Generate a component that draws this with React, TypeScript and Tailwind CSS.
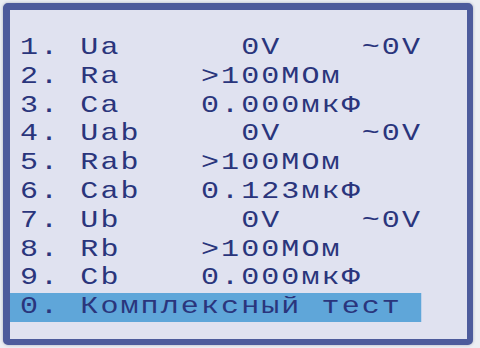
const rows = [
  "1. Ua      0V    ~0V",
  "2. Ra    >100MОм",
  "3. Ca    0.000мкФ",
  "4. Uab     0V    ~0V",
  "5. Rab   >100MОм",
  "6. Cab   0.123мкФ",
  "7. Ub      0V    ~0V",
  "8. Rb    >100MОм",
  "9. Cb    0.000мкФ",
];

export default function App() {
  return (
    <div className="h-[348px] w-[480px] bg-[#eceef3] pl-[3px] pt-[3px]">
      <div className="h-[342px] w-[470px] overflow-hidden rounded-[5px] border-[6px] border-l-[7px] border-t-[7px] border-[#4d5b9c] bg-[#e0e2f0] pt-[24px] shadow-[0_0_3px_rgba(40,50,90,0.35)]">
        {/* LCD glyphs are wider than the font, so stretch the block */}
        <div
          className="origin-top-left scale-x-125 whitespace-pre text-[24px] leading-[28.8px] tracking-[1.68px] text-[#2a357c]"
          style={{ fontFamily: '"Liberation Mono", "DejaVu Sans Mono", monospace' }}
        >
          {rows.map((r) => (
            <div key={r} className="pl-[8px]">
              {r}
            </div>
          ))}
          <div className="w-[329px] bg-[#5fa6d9] pl-[8px]">0. Комплексный тест</div>
        </div>
      </div>
    </div>
  );
}
